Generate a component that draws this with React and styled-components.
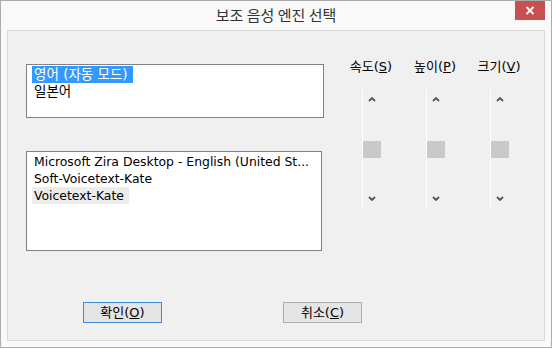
import React from 'react';
import styled, { createGlobalStyle } from 'styled-components';

const GlobalStyle = createGlobalStyle`
    html, body {
        margin: 0;
        padding: 0;
        background: #f8f8f8;
    }
    body {
        font-family: "DejaVu Sans", "Noto Sans CJK KR", sans-serif;
        color: #000;
    }
`

const Window = styled.div`
    box-sizing: border-box;
    width: 552px;
    height: 348px;
    border: 1px solid #acacac;
    background: #f9f9f9;
    display: flex;
    flex-direction: column;
`

const TitleBar = styled.div`
    height: 29px;
    display: grid;
    grid-template-columns: 1fr auto 1fr;
    align-items: start;
`

const Title = styled.div`
    grid-column: 2;
    font-family: "Noto Sans CJK KR", sans-serif;
    font-size: 15px;
    line-height: 28px;
    color: #333;
`

const CloseButton = styled.div`
    grid-column: 3;
    justify-self: end;
    margin-right: 6px;
    width: 30px;
    height: 19px;
    background: #c75050;
    display: flex;
    align-items: center;
    justify-content: center;
`

const Client = styled.div`
    flex: 1;
    margin: 0 6px 6px;
    border: 1px solid #d9d9d9;
    background: #f0f0f0;
    display: flex;
    flex-direction: column;
`

const Top = styled.div`
    display: flex;
`

const LeftCol = styled.div`
    margin-left: 18px;
    padding-top: 33px;
    display: flex;
    flex-direction: column;
    gap: 33px;
`

const ListBox = styled.div`
    box-sizing: border-box;
    width: ${p => p.$w}px;
    height: ${p => p.$h}px;
    border: 1px solid #828282;
    background: #fff;
    padding: 1px 0 0 5px;
`

const Item = styled.div`
    width: fit-content;
    height: 17px;
    line-height: 17px;
    padding: 0 5px 0 2px;
    font-size: ${p => p.$size}px;
    white-space: nowrap;
    background: ${p => p.$selected ? '#3399ff' : p.$hover ? '#ececec' : 'transparent'};
    color: ${p => p.$selected ? '#fff' : '#000'};
`

const RightCol = styled.div`
    margin-left: 15px;
    padding-top: 28px;
    display: flex;
`

const SliderGroup = styled.div`
    width: 64px;
    display: flex;
    flex-direction: column;
    align-items: center;
`

const Label = styled.div`
    font-size: 13px;
    line-height: 16px;
    white-space: nowrap;
    margin-bottom: 15px;
    u { text-decoration: underline; text-underline-offset: 1px; }
`

const Track = styled.div`
    box-sizing: border-box;
    width: 19px;
    height: 117px;
    border-left: 1px solid #fff;
    padding-top: 7px;
    display: flex;
    flex-direction: column;
    align-items: center;
`

const Thumb = styled.div`
    align-self: stretch;
    height: 17px;
    margin: 39px 0 38px;
    background: #c9c9c9;
`

const ButtonRow = styled.div`
    margin-top: 51px;
    padding-left: 75px;
    display: flex;
    gap: 121px;
`

const Button = styled.div`
    box-sizing: border-box;
    width: 79px;
    height: 21px;
    border: 1px solid ${p => p.$default ? '#3c8ad8' : '#adadad'};
    background: #e5e5e5;
    font-size: 13px;
    line-height: 19px;
    text-align: center;
    u { text-decoration: underline; text-underline-offset: 1px; }
`

const Caret = ({ down }) => (
    <svg width="8" height="5" viewBox="0 0 8 5">
        <path d={down ? 'M1 1 L4 4 L7 1' : 'M1 4 L4 1 L7 4'} fill="none" stroke="#555" strokeWidth="1.8" />
    </svg>
);

const Slider = ({ label, mnemonic }) => (
    <SliderGroup>
        <Label>{label}(<u>{mnemonic}</u>)</Label>
        <Track>
            <Caret />
            <Thumb />
            <Caret down />
        </Track>
    </SliderGroup>
);

export default function App() {
    return (
        <>
            <GlobalStyle />
            <Window>
                <TitleBar>
                    <Title>보조 음성 엔진 선택</Title>
                    <CloseButton>
                        <svg width="10" height="9" viewBox="0 0 10 9">
                            <path d="M1.5 1 L8.5 8 M8.5 1 L1.5 8" stroke="#fff" strokeWidth="1.8" />
                        </svg>
                    </CloseButton>
                </TitleBar>
                <Client>
                    <Top>
                        <LeftCol>
                            <ListBox $w={298} $h={54}>
                                <Item $size={13.5} $selected>영어 (자동 모드)</Item>
                                <Item $size={13.5}>일본어</Item>
                            </ListBox>
                            <ListBox $w={296} $h={100}>
                                <Item $size={12.4}>Microsoft Zira Desktop - English (United St...</Item>
                                <Item $size={12.4}>Soft-Voicetext-Kate</Item>
                                <Item $size={12.4} $hover>Voicetext-Kate</Item>
                            </ListBox>
                        </LeftCol>
                        <RightCol>
                            <Slider label="속도" mnemonic="S" />
                            <Slider label="높이" mnemonic="P" />
                            <Slider label="크기" mnemonic="V" />
                        </RightCol>
                    </Top>
                    <ButtonRow>
                        <Button $default>확인(<u>O</u>)</Button>
                        <Button>취소(<u>C</u>)</Button>
                    </ButtonRow>
                </Client>
            </Window>
        </>
    );
}
